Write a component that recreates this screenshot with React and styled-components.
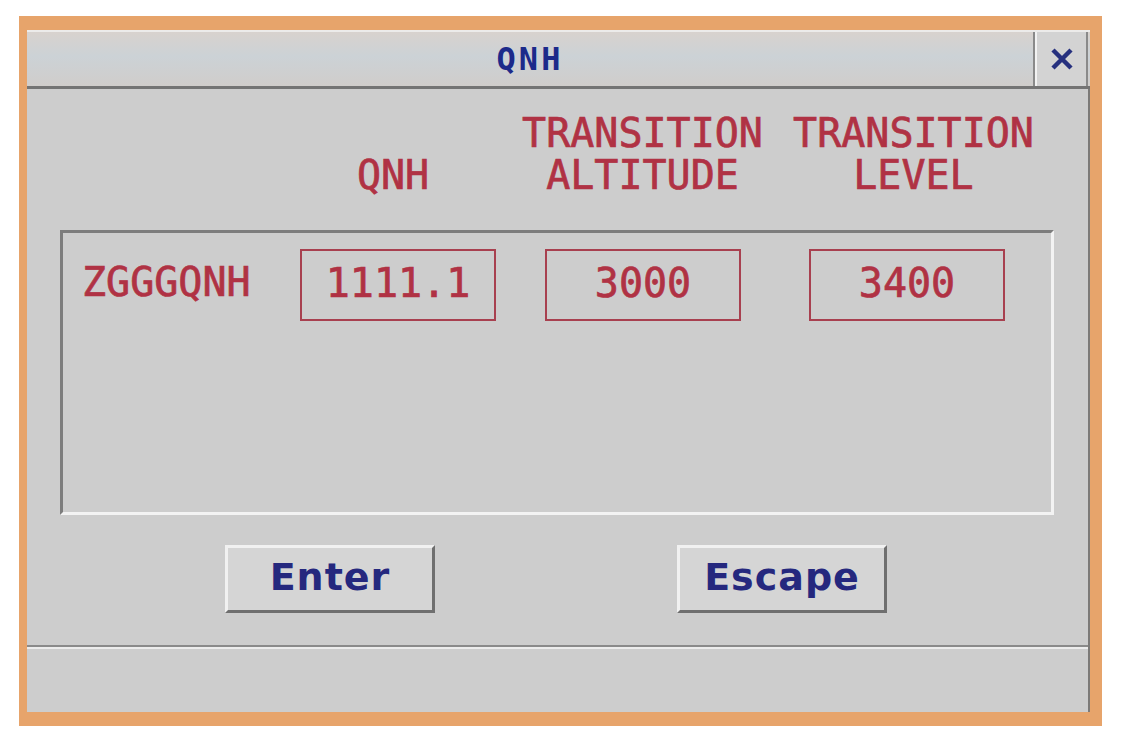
import React from 'react'
import styled, {createGlobalStyle} from 'styled-components'

const GlobalStyle = createGlobalStyle`
  body {
    margin: 0;
    background: #ffffff;
    font-family: "DejaVu Sans Mono", "Liberation Mono", monospace;
  }
`

const Frame = styled.div`
  margin: 16px 0 0 19px;
  width: 1083px;
  box-sizing: border-box;
  border-style: solid;
  border-color: #e7a46b;
  border-width: 14px 12px 14px 8px;
  box-shadow: 0 3px 0 #a9a39c, inset -2px 0 0 #7c7a78;
  background: #cdcdcd;
  display: flex;
  flex-direction: column;
`

const TitleBar = styled.div`
  display: flex;
  height: 59px;
  box-sizing: border-box;
  border-top: 2px solid #ecebea;
  border-bottom: 3px solid #747474;
  background: linear-gradient(#d8d2ce, #ccd2d6 45%, #d0cdcb);
`

const Title = styled.div`
  flex: 1;
  display: flex;
  align-items: center;
  justify-content: center;
  color: #1c2a8a;
  font-weight: bold;
  font-size: 32px;
  letter-spacing: 3px;
`

const CloseButton = styled.button`
  width: 55px;
  margin-right: 2px;
  border: none;
  border-left: 2px solid #8a8a8a;
  box-shadow: inset 2px 0 0 #f2f2f2, inset -2px 0 0 #8a8a8a;
  background: #d3d3d3;
  display: flex;
  align-items: center;
  justify-content: center;
  padding: 0;
`

const Content = styled.div`
  padding: 23px 36px 30px 33px;
  height: 556px;
  box-sizing: border-box;
  display: flex;
  flex-direction: column;
`

const redText = `
  color: #b03244;
  font-size: 40px;
  -webkit-text-stroke: 0.7px #b03244;
`

const HeaderGrid = styled.div`
  display: grid;
  grid-template-columns: 219px 228px 271px 271px;
  ${redText}
  line-height: 42px;
  text-align: center;
`

const Header = styled.div`
  display: flex;
  flex-direction: column;
  justify-content: flex-end;
  white-space: pre;
`

const Panel = styled.div`
  margin-top: 34px;
  height: 285px;
  box-sizing: border-box;
  border-style: solid;
  border-width: 3px;
  border-color: #7d7d7d #f3f3f3 #f3f3f3 #7d7d7d;
  padding: 16px 0 0 19px;
`

const Row = styled.div`
  display: grid;
  grid-template-columns: 218px 245px 264px 196px;
  align-items: center;
`

const Label = styled.div`
  ${redText}
  margin-top: -6px;
`

const Field = styled.div`
  width: 196px;
  height: 72px;
  box-sizing: border-box;
  border: 2px solid #a8404f;
  display: flex;
  align-items: center;
  justify-content: center;
  ${redText}
  padding-bottom: 4px;
`

const ButtonRow = styled.div`
  margin-top: 30px;
  display: flex;
  padding-left: 165px;
  gap: 242px;
`

const Button = styled.button`
  width: 210px;
  height: 68px;
  box-sizing: border-box;
  background: #d5d5d5;
  border-style: solid;
  border-width: 3px;
  border-color: #f1f1f1 #6f6f6f #6f6f6f #f1f1f1;
  color: #25287e;
  font-family: "DejaVu Sans", "Liberation Sans", sans-serif;
  font-weight: bold;
  font-size: 38px;
  letter-spacing: 1px;
  padding: 0 0 4px;
`

const Separator = styled.div`
  height: 4px;
  border-top: 2px solid #8a8a8a;
  border-bottom: 2px solid #ececec;
  box-sizing: border-box;
  margin-right: 2px;
`

const StatusBar = styled.div`
  height: 63px;
`

const XIcon = () => (
  <svg width="26" height="24" viewBox="0 0 26 24">
    <path d="M4 3 L22 21 M22 3 L4 21" stroke="#26307e" strokeWidth="4.5" fill="none" />
  </svg>
)

const fields = [
  {value: '1111.1'},
  {value: '3000'},
  {value: '3400'}
]

const App = () => {
  return (
    <>
      <GlobalStyle />
      <Frame>
        <TitleBar>
          <Title>QNH</Title>
          <CloseButton type='button'><XIcon /></CloseButton>
        </TitleBar>
        <Content>
          {/* column headers */}
          <HeaderGrid>
            <div />
            <Header>QNH</Header>
            <Header>{'TRANSITION\nALTITUDE'}</Header>
            <Header>{'TRANSITION\nLEVEL'}</Header>
          </HeaderGrid>
          {/* values */}
          <Panel>
            <Row>
              <Label>ZGGGQNH</Label>
              {fields.map((f, index) => (
                <Field key={index}>{f.value}</Field>
              ))}
            </Row>
          </Panel>
          <ButtonRow>
            <Button type='button'>Enter</Button>
            <Button type='button'>Escape</Button>
          </ButtonRow>
        </Content>
        <Separator />
        <StatusBar />
      </Frame>
    </>
  )
}

export default App
